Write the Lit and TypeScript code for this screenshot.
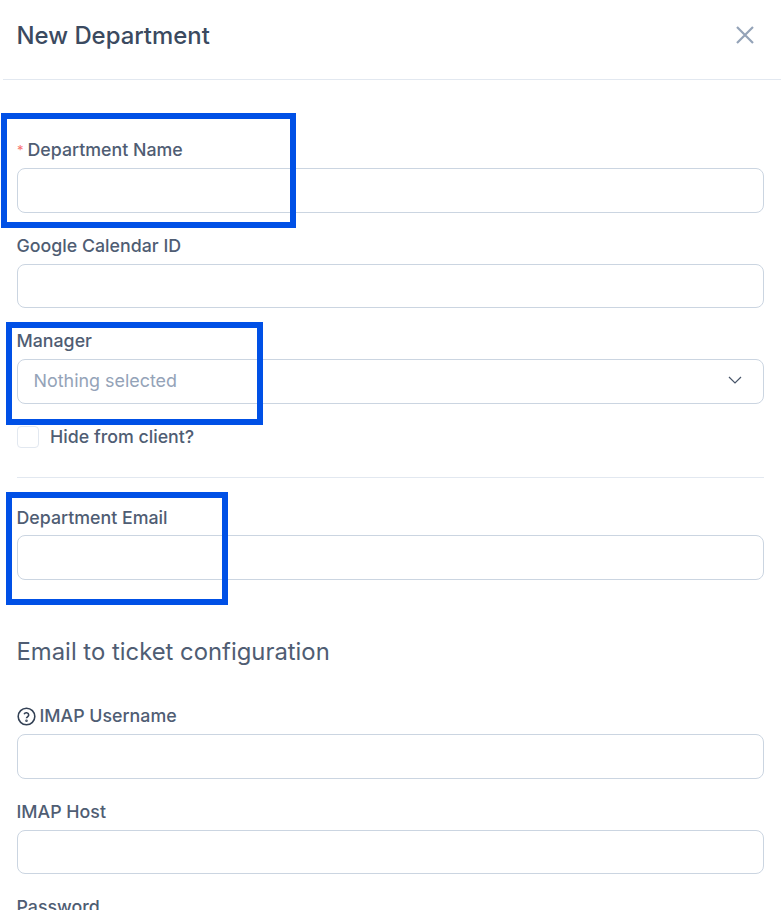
import { LitElement, html, css } from "lit";
import { customElement } from "lit/decorators.js";

@customElement("app-root")
export class AppRoot extends LitElement {
  static styles = css`
    :host { display: block; position: relative; width: 781px; height: 910px; overflow: hidden; background: #fff; font-family: Inter, "Liberation Sans", sans-serif; color: #4f5d73; }
    .header { margin-left: 3px; height: 80px; box-sizing: border-box; border-bottom: 1px solid #e2e8f0; padding: 0 24px 9px 13.5px; display: flex; align-items: center; justify-content: space-between; }
    h4 { margin: 0; font-size: 23.9px; font-weight: 500; color: #3b4a60; }
    .close { width: 24px; height: 24px; display: block; color: #94a3b8; }
    .body { padding: 0 17px; width: 747px; box-sizing: content-box; }
    .group { display: flex; flex-direction: column; }
    label { display: flex; align-items: center; gap: 4px; font-size: 17.8px; font-weight: 500; line-height: 24px; color: #4f5d73; height: 24px; margin: 0 0 6px -0.5px; white-space: nowrap; }
    .g4 label { margin-bottom: 5.5px; }
    .req { color: #f87171; font-size: 13px; font-weight: 400; margin-left: 0.5px; }
    .input { height: 44.6px; box-sizing: border-box; border: 1px solid #cbd5e1; border-radius: 8px; background: #fff; display: flex; align-items: center; justify-content: space-between; padding: 0 20px 2px 15.5px; color: #94a3b8; font-size: 17.9px; }
    .chev { width: 16px; height: 16px; color: #475569; }
    .help { width: 19px; height: 19px; color: #334155; }
    .check { display: flex; align-items: center; gap: 11px; font-size: 17.8px; font-weight: 500; height: 24px; }
    .box { width: 22px; height: 22px; box-sizing: border-box; border: 1px solid #e2e8f0; border-radius: 4px; }
    hr { border: 0; border-top: 1px solid #e2e8f0; margin: 0; }
    h5 { margin: 0 0 0 -0.5px; font-size: 23.85px; font-weight: 400; color: #4f5d73; line-height: 32px; }
    .mark { position: absolute; border: 6px solid #0050e6; box-sizing: border-box; pointer-events: none; }
    .m1 { left: 1px; top: 113px; width: 295px; height: 115px; }
    .m2 { left: 6px; top: 322px; width: 257px; height: 103px; }
    .m3 { left: 6px; top: 492px; width: 222px; height: 113px; }
    .g1 { margin-top: 58px; }
    .g2 { margin-top: 21px; }
    .g3 { margin-top: 21px; }
    .c1 { margin-top: 21.2px; }
    .h1 { margin-top: 28px; }
    .g4 { margin-top: 28px; }
    .t1 { margin-top: 56px; }
    .g5 { margin-top: 36px; }
    .g6 { margin-top: 21.2px; }
    .g7 { margin-top: 21px; }
  `;

  private field(label: unknown, cls: string) {
    return html`<div class="group ${cls}"><label>${label}</label><div class="input"></div></div>`;
  }

  render() {
    return html`
      <div class="header">
        <h4>New Department</h4>
        <svg class="close" viewBox="0 0 24 24" fill="none" stroke="currentColor" stroke-width="2.2"><path d="M4 4l16 16M20 4L4 20" /></svg>
      </div>
      <div class="body">
        ${this.field(html`<span class="req">*</span>Department Name`, "g1")}
        ${this.field("Google Calendar ID", "g2")}
        <div class="group g3">
          <label>Manager</label>
          <div class="input">Nothing selected
            <svg class="chev" viewBox="0 0 16 16" fill="none" stroke="currentColor" stroke-width="1.2"><path d="M2 5l6 6 6-6" /></svg>
          </div>
        </div>
        <div class="check c1"><span class="box"></span>Hide from client?</div>
        <hr class="h1" />
        ${this.field("Department Email", "g4")}
        <h5 class="t1">Email to ticket configuration</h5>
        ${this.field(html`<svg class="help" viewBox="0 0 24 24" fill="none" stroke="currentColor" stroke-width="2"><circle cx="12" cy="12" r="10.5" /><path d="M9 9.2a3 3 0 0 1 5.8 1c0 2-2.8 2.4-2.8 4" /><circle cx="12" cy="17.5" r=".6" /></svg>IMAP Username`, "g5")}
        ${this.field("IMAP Host", "g6")}
        ${this.field("Password", "g7")}
      </div>
      <div class="mark m1"></div>
      <div class="mark m2"></div>
      <div class="mark m3"></div>
    `;
  }
}
